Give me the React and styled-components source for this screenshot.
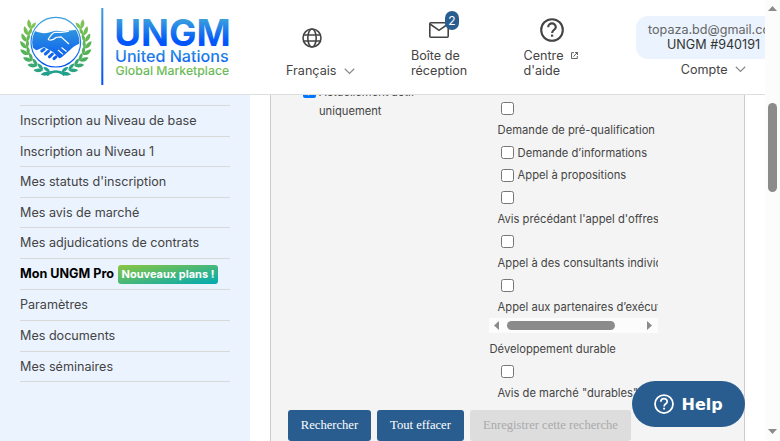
import React from "react";
import styled, { createGlobalStyle, css } from "styled-components";

const Global = createGlobalStyle`
  * { box-sizing: border-box; }
  html, body { margin: 0; padding: 0; overflow: hidden; background: #fff; }
  body { font-family: Inter, "Liberation Sans", sans-serif; font-size: 12.6px; color: #444; }
`;

const Window = styled.div`
  display: grid;
  grid-template-columns: 765px 15px;
  width: 780px;
  height: 441px;
  overflow: hidden;
`;

const Page = styled.div`
  display: grid;
  grid-template-rows: 95px 346px;
  min-width: 0;
  overflow: hidden;
`;

const Header = styled.header`
  display: flex;
  align-items: flex-start;
  height: 95px;
  border-bottom: 1px solid #dedede;
  background: #fff;
  overflow: hidden;
`;

const Logo = styled.svg`
  flex: none;
  display: block;
  width: 250px;
  height: 94px;
`;

const HeaderItem = styled.div`
  flex: none;
  display: flex;
  flex-direction: column;
  width: ${(p) => p.$width}px;
  padding-top: ${(p) => p.$top}px;
  margin-left: ${(p) => p.$gap || 0}px;
`;

const IconSlot = styled.div`
  position: relative;
  display: flex;
  height: ${(p) => p.$height}px;
  margin-left: ${(p) => p.$indent}px;
  svg { display: block; }
`;

const ItemLabel = styled.div`
  display: flex;
  align-items: flex-start;
  gap: ${(p) => p.$gap || 0}px;
  line-height: 15px;
  white-space: nowrap;
  svg { flex: none; margin-top: ${(p) => p.$drop || 0}px; }
`;

const CountBadge = styled.span`
  position: absolute;
  left: 16px;
  top: -11px;
  width: 14px;
  height: 19px;
  border-radius: 7px;
  background: #2a5d8f;
  color: #fff;
  font-size: 12px;
  line-height: 19px;
  text-align: center;
`;

const Account = styled.div`
  flex: none;
  width: 160px;
  margin-left: 34.5px;
  padding-top: 16px;
`;

const AccountPill = styled.div`
  height: 43px;
  padding: 6px 12px 0;
  border-radius: 12px;
  background: #eaf3fe;
  line-height: 15px;
  white-space: nowrap;
`;

const Email = styled.div`
  color: #666;
`;

const AccountId = styled.div`
  padding-left: 19px;
  color: #333;
`;

const AccountMenu = styled(ItemLabel)`
  margin: 3px 0 0 44.7px;
`;

const Body = styled.div`
  display: flex;
  height: 346px;
  overflow: hidden;
`;

const Sidebar = styled.nav`
  flex: none;
  width: 250px;
  padding: 10.4px 20px 0;
  background: #eaf3fe;
`;

const NavList = styled.ul`
  margin: 0;
  padding: 0;
  list-style: none;
  border-top: 1px solid #d9d9d9;
`;

const NavItem = styled.li`
  display: flex;
  align-items: center;
  gap: 4px;
  height: ${(p) => p.$height}px;
  padding-bottom: 1px;
  border-bottom: 1px solid #d9d9d9;
  white-space: nowrap;
  ${(p) => p.$strong && css`padding-bottom: 0; color: #000; font-weight: 700;`}
`;

const PlanTag = styled.span`
  height: 19px;
  width: 100px;
  margin-top: 1px;
  border-radius: 3px;
  background: linear-gradient(to bottom right, #8cc63f, #00a9b5);
  color: #fff;
  font-size: 11px;
  line-height: 19px;
  text-align: center;
`;

const Panel = styled.main`
  flex: none;
  display: flex;
  flex-direction: column;
  width: 475px;
  height: 346px;
  margin-left: 20px;
  border: solid #ccc;
  border-width: 0 1px;
  background: #f4f4f4;
  font-size: 11.2px;
  overflow: hidden;
`;

const Columns = styled.div`
  display: flex;
  height: 315px;
`;

const ActiveFilter = styled.label`
  flex: none;
  display: flex;
  gap: 3px;
  width: 186px;
  height: 40px;
  margin: -12px 0 0 32px;
  line-height: 19px;
  span { width: 120px; }
`;

const Check = styled.input`
  flex: none;
  width: 13px;
  height: 13px;
  margin: 0;
`;

const ActiveCheck = styled(Check)`
  margin-top: 2px;
`;

const Filters = styled.div`
  flex: none;
  width: 169px;
`;

const NoticeTypes = styled.div`
  height: 223px;
  padding: 2px 0 0 8.6px;
  overflow: hidden;
`;

const Option = styled.label`
  display: flex;
  flex-direction: ${(p) => (p.$inline ? "row" : "column")};
  align-items: ${(p) => (p.$inline ? "center" : "flex-start")};
  gap: ${(p) => (p.$inline ? "4px" : "0")};
  height: ${(p) => (p.$inline ? 22.4 : 44)}px;
  line-height: 22px;
  white-space: nowrap;
  ${Check} { margin: ${(p) => (p.$inline ? "1px 0 0 3px" : "5px 0 4px 3px")}; }
  span { padding-top: ${(p) => (p.$inline ? "1px" : "0")}; }
`;

const HScroll = styled.div`
  display: flex;
  align-items: center;
  justify-content: space-between;
  height: 15px;
  padding: 0 6px 0 5px;
  background: #fcfcfc;
`;

const HThumb = styled.span`
  width: 108px;
  height: 9px;
  margin-right: 25px;
  border-radius: 5px;
  background: #8b8b8b;
`;

const GroupTitle = styled.div`
  height: 27px;
  padding: 5px 0 0 .5px;
  line-height: 22px;
`;

const Sustainable = styled.div`
  padding-left: 8.6px;
`;

const Actions = styled.div`
  display: flex;
  gap: 6px;
  padding-left: 17px;
`;

const Button = styled.button`
  flex: none;
  width: ${(p) => p.$width}px;
  height: 31px;
  padding: 0;
  border: 0;
  border-radius: 3px;
  background: ${(p) => (p.disabled ? "#ddd" : "#2a5d8f")};
  color: ${(p) => (p.disabled ? "#aaa" : "#fff")};
  font: 12.6px "Liberation Serif", serif;
`;

const HelpButton = styled.button`
  position: absolute;
  left: 632px;
  top: 381px;
  display: flex;
  align-items: center;
  gap: 7.5px;
  width: 113px;
  height: 46px;
  padding: 0 0 0 22px;
  border: 0;
  border-radius: 23px;
  background: #2a5d8f;
  color: #fff;
  font: 700 16px "DejaVu Sans", sans-serif;
`;

const VScroll = styled.div`
  display: flex;
  flex-direction: column;
  align-items: center;
  justify-content: space-between;
  height: 441px;
  padding: 6px 0 7px;
  background: #fcfcfc;
`;

const VThumb = styled.span`
  width: 9px;
  height: 89px;
  margin-bottom: 146px;
  border-radius: 5px;
  background: #8b8b8b;
`;

const ARROWS = {
  up: ["0,5 4.5,0 9,5", 9, 5],
  down: ["0,0 9,0 4.5,5", 9, 5],
  left: ["5,0 5,9 0,4.5", 5, 9],
  right: ["0,0 5,4.5 0,9", 5, 9],
};

function Arrow({ to }) {
  const [points, w, h] = ARROWS[to];
  return <svg width={w} height={h} viewBox={`0 0 ${w} ${h}`}><polygon points={points} fill="#8b8b8b" /></svg>;
}

function Chevron() {
  return (
    <svg width="11" height="7" viewBox="0 0 11 7" fill="none" stroke="#888" strokeWidth="1.2">
      <path d="M.8 .8 5.5 5.4 10.2 .8" />
    </svg>
  );
}

// x, y, heading (degrees clockwise from up), colour
const STEM = [
  [51, 72.5, -68, "#1f9f8c"], [44, 70, -58, "#2aa383"], [38, 66, -48, "#3aa870"], [33, 61, -36, "#4bae5f"],
  [29.2, 55, -22, "#55b258"], [27.4, 48.5, -8, "#5fb557"], [27.2, 42, 4, "#68b955"], [28.4, 35.5, 14, "#72bd55"],
  [31, 29, 24, "#7cc254"],
];

function Branch() {
  return (
    <g>
      {STEM.map(([x, y, heading, color]) => (
        <g key={y} transform={`translate(${x - 0.8} ${y}) rotate(${heading})`} fill={color}>
          <path transform="rotate(-34)" d="M0 0C-3.2 -3.5 -2.3 -7 0 -9.8C2 -7 2.5 -3.5 0 0Z" />
          <path transform="rotate(16)" d="M0 0C-2 -3 -1.8 -6 0 -8.8C2.3 -6 2.5 -3 0 0Z" />
        </g>
      ))}
      <path d="M64.5 75.5C60 71.2 55 70.8 50 72.2" fill="none" stroke="#1f9f8c" strokeWidth="1.8" />
    </g>
  );
}

function BrandLogo() {
  return (
    <Logo viewBox="0 0 250 94">
      <defs>
        <linearGradient id="blue" gradientUnits="userSpaceOnUse" x1="0" y1="24" x2="0" y2="66">
          <stop offset="0" stopColor="#379fdb" /><stop offset="1" stopColor="#0051f5" />
        </linearGradient>
        <linearGradient id="word" gradientUnits="userSpaceOnUse" x1="0" y1="19" x2="0" y2="46">
          <stop offset="0" stopColor="#3a9fdd" /><stop offset=".85" stopColor="#0056fb" />
        </linearGradient>
        <linearGradient id="nations" gradientUnits="userSpaceOnUse" x1="0" y1="50" x2="0" y2="63">
          <stop offset="0" stopColor="#3898dc" /><stop offset="1" stopColor="#075cf4" />
        </linearGradient>
        <linearGradient id="bar" gradientUnits="userSpaceOnUse" x1="0" y1="8" x2="0" y2="85">
          <stop offset="0" stopColor="#3b9fdc" /><stop offset="1" stopColor="#0051fb" />
        </linearGradient>
        <linearGradient id="global" gradientUnits="userSpaceOnUse" x1="0" y1="66" x2="0" y2="78">
          <stop offset="0" stopColor="#86c653" /><stop offset="1" stopColor="#4eac5d" />
        </linearGradient>
        <clipPath id="disc"><circle cx="55.8" cy="42.2" r="23.6" /></clipPath>
      </defs>
      <Branch />
      <g transform="translate(111.6 0) scale(-1 1)"><Branch /></g>
      <circle cx="55.8" cy="42.2" r="24.8" fill="#fff" stroke="url(#blue)" strokeWidth="1.2" />
      <g clipPath="url(#disc)">
        <path fill="url(#blue)" d="M30 30 35 31C40 33 44 34 49 32.5L54 31C58 30.3 61 31.5 65 31L75 30 82 27V43C77 44 73 47 70 50L62 57C58 60 54 61 50 59.5L46 58 41 52.5 36 50 30 46Z" />
        <path d="M36 50.5 44 47 53 52 60 59 50 62 40 58Z" fill="#fff" />
        <path d="M41.8 51 44.2 49.2M45.4 54 48.6 51.2M49.4 56.8 52.4 54M54 58.6 56 56.8" stroke="url(#blue)" strokeWidth="3" strokeLinecap="round" />
        <path d="M48 39.5C50.5 36 52 32.5 55 32.3H61C64 32.3 66 32 69 31.2M48 39.5C51 41 54 39.5 56 37.5L61 36.8 69 44M58 50 63 54.4M61.5 47.5 66.5 51.5" fill="none" stroke="#fff" strokeWidth="1.2" />
      </g>
      <rect x="101.3" y="8" width="2" height="77" fill="url(#bar)" />
      <text x="114.2" y="46" fontSize="37" fontWeight="700" textLength="116.6" lengthAdjust="spacingAndGlyphs" fill="url(#word)">UNGM</text>
      <text x="115" y="61.8" fontSize="15.4" fontWeight="500" textLength="113.6" lengthAdjust="spacingAndGlyphs" fill="url(#nations)">United Nations</text>
      <text x="115.6" y="75.4" fontSize="12.2" fontWeight="500" textLength="113.6" lengthAdjust="spacingAndGlyphs" fill="url(#global)">Global Marketplace</text>
    </Logo>
  );
}

function GlobeIcon() {
  return (
    <svg width="20" height="20" viewBox="0 0 20 20" fill="none" stroke="#444" strokeWidth="1.6">
      <circle cx="10" cy="10" r="9" /><ellipse cx="10" cy="10" rx="4.2" ry="9" />
      <path d="M1.6 7H18.4M1.6 13H18.4" />
    </svg>
  );
}

function MailIcon() {
  return (
    <svg width="20" height="16" viewBox="0 0 20 16" fill="none" stroke="#444" strokeWidth="1.6">
      <rect x=".8" y=".8" width="18.4" height="14.4" rx="1" /><path d="M1 2 10 8.3 19 2" />
    </svg>
  );
}

function QuestionIcon({ size, color }) {
  return (
    <svg width={size} height={size} viewBox="0 0 24 24" fill="none" stroke={color} strokeWidth="2.1">
      <circle cx="12" cy="12" r="10.8" />
      <path d="M8.2 9.2A3.8 3.8 0 0 1 15.8 9.2C15.8 11.6 12.1 12 12.1 15" />
      <path d="M11 16.6H13.2V18.7H11Z" fill={color} stroke="none" />
    </svg>
  );
}

function ExternalIcon() {
  return (
    <svg width="7" height="7" viewBox="0 0 7 7" fill="none" stroke="#555" strokeWidth=".9">
      <path d="M3 .7H.5V6.5H6.3V4M4 .5H6.5V3M6.5 .5 2.4 4.6" />
    </svg>
  );
}

const NAV = [
  ["Inscription au Niveau de base", 30.5],
  ["Inscription au Niveau 1", 30.5],
  ["Mes statuts d'inscription", 30.5],
  ["Mes avis de marché", 30.5],
  ["Mes adjudications de contrats", 30.5],
  ["Mon UNGM Pro", 31, "Nouveaux plans !"],
  ["Paramètres", 31],
  ["Mes documents", 31],
  ["Mes séminaires", 30.5],
];

const NOTICES = [
  ["Demande de pré-qualification"],
  ["Demande d’informations", true],
  ["Appel à propositions", true],
  ["Avis précédant l'appel d'offres"],
  ["Appel à des consultants individuels"],
  ["Appel aux partenaires d’exécution"],
];

export default function App() {
  return (
    <>
      <Global />
      <Window>
        <Page>
          <Header>
            <BrandLogo />
            <HeaderItem $width={75} $top={28} $gap={36}>
              <IconSlot $height={35} $indent={16}><GlobeIcon /></IconSlot>
              <ItemLabel $gap={8} $drop={5}>Français<Chevron /></ItemLabel>
            </HeaderItem>
            <HeaderItem $width={70} $top={22} $gap={50}>
              <IconSlot $height={26} $indent={18}><MailIcon /><CountBadge>2</CountBadge></IconSlot>
              <ItemLabel>Boîte de<br />réception</ItemLabel>
            </HeaderItem>
            <HeaderItem $width={78} $top={18} $gap={42.5}>
              <IconSlot $height={30} $indent={16.5}><QuestionIcon size={24} color="#444" /></IconSlot>
              <ItemLabel $gap={8} $drop={4}><span>Centre<br />d'aide</span><ExternalIcon /></ItemLabel>
            </HeaderItem>
            <Account>
              <AccountPill>
                <Email>topaza.bd@gmail.com</Email>
                <AccountId>UNGM #940191</AccountId>
              </AccountPill>
              <AccountMenu $gap={7.5} $drop={4}>Compte<Chevron /></AccountMenu>
            </Account>
          </Header>
          <Body>
            <Sidebar>
              <NavList>
                {NAV.map(([label, height, tag]) => (
                  <NavItem key={label} $height={height} $strong={!!tag}>{label}{tag && <PlanTag>{tag}</PlanTag>}</NavItem>
                ))}
              </NavList>
            </Sidebar>
            <Panel>
              <Columns>
                <ActiveFilter><ActiveCheck type="checkbox" defaultChecked /><span>Actuellement actif uniquement</span></ActiveFilter>
                <Filters>
                  <NoticeTypes>
                    {NOTICES.map(([label, inline]) => (
                      <Option key={label} $inline={inline}><Check type="checkbox" /><span>{label}</span></Option>
                    ))}
                  </NoticeTypes>
                  <HScroll><Arrow to="left" /><HThumb /><Arrow to="right" /></HScroll>
                  <GroupTitle>Développement durable</GroupTitle>
                  <Sustainable>
                    <Option><Check type="checkbox" /><span>Avis de marché "durables"</span></Option>
                  </Sustainable>
                </Filters>
              </Columns>
              <Actions>
                <Button $width={83}>Rechercher</Button>
                <Button $width={87}>Tout effacer</Button>
                <Button $width={161} disabled>Enregistrer cette recherche</Button>
              </Actions>
            </Panel>
          </Body>
        </Page>
        <VScroll><Arrow to="up" /><VThumb /><Arrow to="down" /></VScroll>
      </Window>
      <HelpButton><QuestionIcon size={20} color="#fff" />Help</HelpButton>
    </>
  );
}
